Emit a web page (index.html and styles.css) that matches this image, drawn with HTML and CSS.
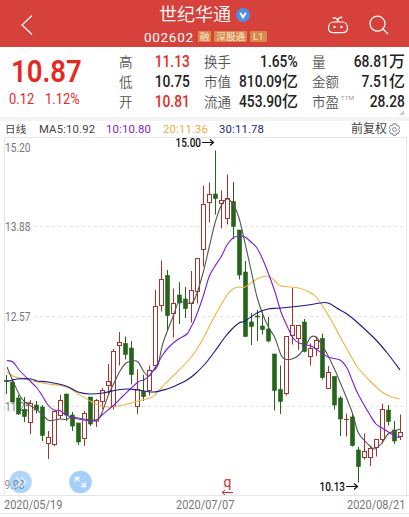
FILE: index.html
```
<!DOCTYPE html>
<html lang="zh-CN">
<head>
  <meta charset="UTF-8">
  <meta name="viewport" content="width=device-width, initial-scale=1.0">
  <title>世纪华通 002602</title>
  <link rel="stylesheet" href="styles.css">
</head>
<body>

  <header class="top-bar">
    <svg class="back" width="14" height="22" viewBox="0 0 14 22"><path d="M12 1.5L2 11l10 9.5"/></svg>
    <div class="stock">
      <h1>世纪华通
        <svg class="verified" width="14" height="14" viewBox="0 0 14 14"><circle cx="7" cy="7" r="7"/><path d="M4.2 4.7L7 9.4l2.8-4.7"/></svg>
      </h1>
      <div class="code-row">
        <span class="code">002602</span>
        <span class="tag">融</span>
        <span class="tag">深股通</span>
        <span class="tag">L1</span>
      </div>
    </div>
    <div class="actions">
      <svg width="22" height="20" viewBox="0 0 22 20"><path d="M7 2.8c2 0 3.7.9 3.7 4M14.2 2.4c-2 0-3.5 1.5-3.5 4.4M6.5 7h9c3 0 5 2.7 5 6s-2 4.700-5 4.700h-9c-3 0-5-1.400-5-4.700s2-6 5-6z"/><circle class="dot" cx="7.5" cy="12" r="1.2"/><circle class="dot" cx="14.5" cy="12" r="1.2"/><circle class="dot" cx="6.5" cy="2.8" r=".9"/><circle class="dot" cx="14.5" cy="2.4" r=".9"/></svg>
      <svg width="20" height="20" viewBox="0 0 20 20"><circle cx="8.5" cy="8.7" r="7.5"/><path d="M14 14l5 5"/></svg>
    </div>
  </header>

  <section class="quote">
    <div class="price">
      <div class="last"><span class="num">10.87</span></div>
      <div class="change"><span class="num">0.12</span><span class="num">1.12%</span></div>
    </div>
    <dl class="stats stats-a">
      <dt>高</dt><dd class="red"><span class="num">11.13</span></dd>
      <dt>低</dt><dd><span class="num">10.75</span></dd>
      <dt>开</dt><dd class="red"><span class="num">10.81</span></dd>
    </dl>
    <dl class="stats stats-b">
      <dt>换手</dt><dd><span class="num">1.65%</span></dd>
      <dt>市值</dt><dd><span class="num">810.09</span>亿</dd>
      <dt>流通</dt><dd><span class="num">453.90</span>亿</dd>
    </dl>
    <dl class="stats stats-c">
      <dt>量</dt><dd><span class="num">68.81</span>万</dd>
      <dt>金额</dt><dd><span class="num">7.51</span>亿</dd>
      <dt>市盈<sup>TTM</sup></dt><dd><span class="num">28.28</span></dd>
    </dl>
    <i class="corner"></i>
  </section>

  <nav class="legend">
    <span class="period">日线</span>
    <span class="ma5">MA5:10.92</span>
    <span class="ma10">10:10.80</span>
    <span class="ma20">20:11.36</span>
    <span class="ma30">30:11.78</span>
    <span class="adjust">前复权</span>
    <svg class="gear" width="13" height="13" viewBox="0 0 13 13"><path d="M5 .8h3l.5 1.7 1.7-.3 1.5 2.6-1.2 1.7 1.2 1.7-1.5 2.6-1.7-.3-.5 1.7H5l-.5-1.7-1.7.3-1.5-2.6 1.2-1.7-1.2-1.7 1.5-2.6 1.7.3z"/><circle cx="6.5" cy="6.5" r="1.9"/></svg>
  </nav>

  <svg class="chart" id="chart" width="409" height="359" viewBox="0 137 409 359"></svg>

  <footer class="dates">
    <span class="date">2020/05/19</span>
    <span class="date">2020/07/07</span>
    <span class="date">2020/08/21</span>
  </footer>

  <script src="chart.js"></script>
</body>
</html>
```
FILE: styles.css
```
body {
  margin: 0;
  width: 409px;
  height: 517px;
  overflow: hidden;
  background: #fff;
  font-family: Roboto, "Noto Sans CJK SC", sans-serif;
  color: #222;
}

svg {
  display: block;
  fill: none;
}

.top-bar {
  height: 47px;
  background: #d6413b;
  color: #fff;
  display: grid;
  grid-template-columns: 112px 1fr 112px;
}

.top-bar svg {
  stroke: #fff;
  stroke-width: 1.2;
}

.back {
  margin: 14px 0 0 20px;
}

.stock {
  padding-left: 32px;
}

h1 {
  margin: 4px 0 0 15px;
  height: 22px;
  display: flex;
  align-items: center;
  gap: 5px;
  font-size: 18px;
  line-height: 22px;
  font-weight: 350;
  white-space: nowrap;
}

.top-bar .verified {
  fill: #4e8ee8;
  stroke: none;
}

.top-bar .verified path {
  fill: none;
  stroke: #fff;
  stroke-width: 2;
}

.code-row {
  display: flex;
  align-items: center;
  height: 21px;
  gap: 3px;
  white-space: nowrap;
}

.code {
  font-size: 13.5px;
  letter-spacing: 0.7px;
  margin-right: 1px;
}

.tag {
  background: #d8894c;
  color: #fbe8d3;
  font-size: 9.6px;
  line-height: 11px;
  height: 11px;
  padding: 0 2px;
  border-radius: 1px;
}

.tag:last-child {
  padding: 0 3px;
}

.actions {
  display: flex;
  gap: 20px;
  padding: 15px 0 0 30px;
}

.actions .dot {
  fill: #fff;
  stroke: none;
}

.quote {
  height: 70px;
  display: grid;
  grid-template-columns: 119px 71px 108px 107px;
  position: relative;
}

.num {
  display: inline-block;
  transform: scaleX(0.86);
  transform-origin: right;
}

.price .num {
  transform-origin: left;
}

.price {
  color: #e6291f;
}

.last {
  font-size: 32px;
  line-height: 38px;
  font-weight: 600;
  padding: 5px 0 0 11px;
}

.change {
  display: flex;
  font-size: 15px;
  line-height: 18px;
  padding: 0 0 0 9px;
  gap: 7px;
}

.stats {
  margin: 5px 0 0;
  display: grid;
  grid-template-columns: auto 1fr;
  grid-auto-rows: 20px;
  line-height: 20px;
}

.stats dt {
  font-size: 13.5px;
  color: #555;
  font-weight: 350;
  white-space: nowrap;
}

.stats dd {
  margin: 0;
  font-size: 16px;
  font-weight: 500;
  text-align: right;
  white-space: nowrap;
}

.stats .red {
  color: #e6291f;
}

.stats-b,
.stats-c {
  padding-left: 14px;
}

.stats-c {
  grid-template-columns: 27px 1fr;
}

sup {
  font-size: 6px;
  line-height: 0;
  vertical-align: 7px;
  margin-left: 2px;
  letter-spacing: 0.3px;
}

.corner {
  position: absolute;
  right: 5px;
  bottom: 2px;
  border-left: 5px solid transparent;
  border-bottom: 5px solid #ccc;
}

.legend {
  height: 16px;
  border-top: 4px solid #f3f3f3;
  padding: 0 8px 0 5px;
  display: flex;
  align-items: center;
  font-size: 11.3px;
  line-height: 17px;
  letter-spacing: 0.15px;
  color: #444;
  white-space: nowrap;
}

.legend span {
  padding-top: 1px;
}

.period {
  font-size: 10.5px;
  width: 34px;
}

.ma5 {
  width: 67px;
}

.ma10 {
  width: 57px;
  color: #7a18d8;
}

.ma20 {
  width: 56px;
  color: #e8b040;
}

.ma30 {
  color: #1a1a90;
}

.legend .adjust {
  margin-left: auto;
  font-size: 12px;
  letter-spacing: 0;
}

.gear {
  stroke: #777;
  stroke-width: 0.9;
  margin: 1px 0 0 1px;
}

.chart {
  overflow: visible;
}

.chart text {
  font-size: 12.5px;
  fill: #777;
}

.chart .mark {
  fill: #111;
  font-weight: 500;
}

.chart .flag {
  fill: #c9302c;
  font-size: 14px;
}

.frame {
  stroke: #e6e6e6;
}

.grid {
  stroke: #e3e3e3;
  stroke-dasharray: 3 3;
}

.up {
  stroke: #a8322e;
  fill: #fff;
}

.down {
  stroke: #25651a;
  fill: #25651a;
}

.line {
  stroke-width: 1.1;
}

.dates {
  height: 17px;
  border-bottom: 1px solid #e6e6e6;
  display: flex;
  justify-content: space-between;
  padding: 0 4px;
  color: #777;
  line-height: 17px;
}

.date {
  font-size: 12.4px;
  width: 58px;
  transform: scaleX(0.885);
  transform-origin: left;
}
```
FILE: chart.js
```
const chart = document.getElementById("chart");
const STEP = 5.96;

// [high, body top, body bottom, low, rising]
const candles = [
  [375,380.5,381.5,394,0],[379,382,402,402,0],[395,398,414,415,0],[397,409.5,416.5,422,0],
  [400,403.5,422.5,434,1],[401,405,410,413.5,0],[405,407,435.5,441,0],[431,437.5,443.5,459,1],
  [411,411.5,444.5,446,1],[395,400.5,415.5,419,1],[394,394,415,421,0],[412,415,426,431,0],
  [423,423,442,445,0],[411,413.5,438.5,446,1],[397,397,424,426,0],[399,400.5,421,427,1],
  [388,390.5,401.5,409,1],[364,381.5,385.5,394,1],[349,351.5,406.5,409.5,1],[332,342.5,345.5,365.5,1],
  [336.5,343.5,354.5,359.5,0],[341,348,374.5,384.5,0],[369.5,389.5,406.5,414,1],[375,391.5,396.5,401,0],
  [365.5,370.5,390.5,395.5,1],[290,306.5,365.5,370,1],[260.5,279.5,305.5,311.5,1],[270,275.5,315.5,330.5,0],
  [288.5,303.5,313.5,337.5,1],[282,295,303,324,0],[287,299,308.5,318,0],[271,290.5,303.5,322.5,1],
  [258.5,258.5,291.5,303.5,1],[185.5,204.5,249.5,266.5,1],[182.5,194.5,202.5,222.5,1],[150.5,194,198.5,214.5,0],
  [190.5,200.5,203.5,228.5,1],[174.5,198.5,218.5,224.5,1],[182,201.5,226.5,239,0],[230,230,275,279.5,0],
  [261,272,336.5,336.5,0],[313,322,326.5,345,0],[310,316,317,341,0],[311.5,326,329.5,334.5,0],
  [317,329,341,342.5,0],[354,354,390.5,410.5,0],[365.5,389.5,401.5,414,0],[336,336.5,393.5,395.5,1],
  [288,325.5,335.5,344.5,1],[325,325.5,338.5,350,1],[319,322,351.5,352.5,0],[343.5,348.5,356.5,365.5,1],
  [336.5,340.5,348.5,356,1],[333.5,338.5,377.5,379.5,0],[366,372.5,388.5,388.5,1],[376.5,376.5,405,409.5,0],
  [396,398,419,436,0],[413.5,419.5,419.5,436.5,1],[413.5,417,445.5,446.5,0],[447,450,466.5,482.5,0],
  [433.5,451.5,457.5,459.5,1],[446.5,448.5,457.5,466,1],[439.5,439.5,447.5,456.5,1],[403.5,409.5,439.5,443.5,1],
  [405,410,421.5,425.5,0],[421,430,441,444,0],[414.5,432.5,436.5,440,1]
];

const averages = [
  { color: "#edb343", points: "7,372 13,376 25,379 37,382 48,384 63,386 72,390 80,395 90,401 96,404 108,407 123,405 138,401 150,398 155,395 162,387 173,376 187,362 195,352 204,337 213,319 221,305 227,295 233,289 239,287 245,287 257,279 268,276 275,281 281,286 299,288 311,293 317,298 323,307 330,318 343,342 352,358 358,368 370,381 382,392 392,397 400,399" },
  { color: "#555", points: "7,367 13,381 20,396 25,402 31,406 37,410 43,415 49,420.5 60,419 66,419.5 72,417 84,419 96,420 101,415 108,396 114,383 120,371 126,363 132,361 138,362 144,372 149,376 153,371 158,365 163,343 174,314 178,303 183,302 192,303 197,293 203,273 209,248 215,223 221,206 227,199 233,204 239,218 245,243 251,270 257,297 263,315 269,328 275,338 281,355 285,359 292,359 299,355 305,347 311,337 317,338 325,350 334,368 340,382 352,412 358,432 364,440 370,446 375,449 382,443 388,434 395,431 400,429" },
  { color: "#7b1ed6", points: "7,360.5 13,362 20,371 31,382 37,388 43,397 48,405 54,410 60,410.5 66,415 78,419 92,421 97,420 102,415 114,405 123,396 138,382 144,380 150,375 158,363 162,356 168,348 177,340 187,334 191,327 195,319 203,297 209,277 215,266 221,257 227,245 233,238 239,236 245,237 251,242 257,248 263,260 269,275 275,292 281,312 287,326 293,338 299,343 311,346 316,349 328,357 340,360 347,368 352,380 358,394 370,415 376,424 382,428 390,433 396,437 400,437" },
  { color: "#1a1a88", points: "7,381.5 17,379 31,379 37,381 48,382 66,386 78,392 90,394 103,393 117,390 128,389 138,390 153,392 167,389 177,385 187,380 195,374 205,364 215,351 225,337 232,329 239,323 245,321 257,313 268,309 281,308 308,305 320,303 328,303 340,310 347,314 358,323 376,340 388,354 400,370" }
];

// smooth polyline through the points (Catmull-Rom)
function curve(str) {
  const p = str.split(" ").map(s => s.split(",").map(Number));
  let d = `M${p[0]}`;
  for (let i = 0; i < p.length - 1; i++) {
    const a = p[i - 1] || p[i], b = p[i], c = p[i + 1], e = p[i + 2] || c;
    d += `C${b[0] + (c[0] - a[0]) / 6},${b[1] + (c[1] - a[1]) / 6} ${c[0] - (e[0] - b[0]) / 6},${c[1] - (e[1] - b[1]) / 6} ${c}`;
  }
  return d;
}

function label(x, y, text, width, cls = "") {
  return `<text class="${cls}" x="${x}" y="${y}" textLength="${width}" lengthAdjust="spacingAndGlyphs">${text}</text>`;
}

let html = `<path class="frame" d="M4.5 495.5V137.5H406.5V495.5M0 495.5H409"/>`;
[226.5, 316.5, 406.5].forEach(y => {
  html += `<path class="grid" d="M34 ${y}H406"/>`;
});

html += label(5, 151.5, "15.20", 25.5);
html += label(5, 230.5, "13.88", 25.5);
html += label(5, 320.5, "12.57", 25.5);
html += label(5, 411, "11.25", 25.5);

candles.forEach(([high, top, bottom, low, up], i) => {
  const x = Math.round(6.2 + i * STEP) + 0.5;
  const wick = up ? `M${x} ${high}V${top}M${x} ${bottom}V${low}` : `M${x} ${high}V${low}`;
  const body = top === bottom
    ? `<path d="M${x - 2.5} ${top}H${x + 2.5}"/>`
    : `<rect x="${x - 2}" y="${top}" width="4" height="${bottom - top}" ${up ? "" : 'stroke-width=".6"'}/>`;
  html += `<g class="${up ? "up" : "down"}"><path d="${wick}"/>${body}</g>`;
});

averages.forEach(a => {
  html += `<path class="line" stroke="${a.color}" d="${curve(a.points)}"/>`;
});

html += label(175.5, 147, "15.00", 25.5, "mark");
html += `<path stroke="#111" stroke-width="1.2" d="M202 142.5H213M210 139.5L213.5 142.5L210 145.5"/>`;
html += label(319.5, 490.5, "10.13", 25.5, "mark");
html += `<path stroke="#111" stroke-width="1.2" d="M346 486.5H357M354 483.5L357.5 486.5L354 489.5"/>`;
html += `<text class="flag" x="223.5" y="487">q</text>
  <path stroke="#c9302c" d="M233 492.5H222M225 490L222 492.5L225 495"/>`;

// round buttons, the lowest price label stays readable over the first one
html += `<circle cx="20.5" cy="482" r="11.3" fill="#aed6fb"/>`;
html += `<g opacity=".8">${label(4.5, 488.5, "9.93", 20)}</g>`;
html += `<path stroke="#e6f3ff" stroke-width="1.2" d="M16 477l5 5-5 5M21 477l5 5-5 5"/>
  <circle cx="80.5" cy="482" r="11.3" fill="#a3d0fb"/>
  <path stroke="#fff" stroke-width="1.3" d="M75.5 482V477.5H80M75.5 477.5L79.5 481M85.5 482V486.5H81M85.5 486.5L81.5 483"/>`;

chart.innerHTML = html;
```
